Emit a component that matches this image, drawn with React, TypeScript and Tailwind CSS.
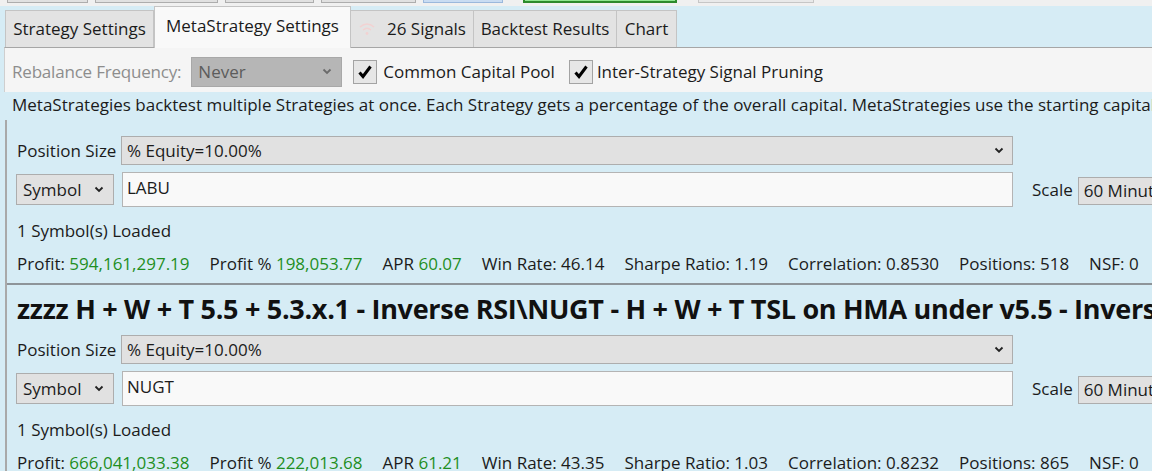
import React from 'react';

const stats1 = [
  { label: 'Profit:', value: '594,161,297.19', green: true },
  { label: 'Profit %', value: '198,053.77', green: true },
  { label: 'APR', value: '60.07', green: true },
  { label: 'Win Rate:', value: '46.14' },
  { label: 'Sharpe Ratio:', value: '1.19' },
  { label: 'Correlation:', value: '0.8530' },
  { label: 'Positions:', value: '518' },
  { label: 'NSF:', value: '0' },
];

const stats2 = [
  { label: 'Profit:', value: '666,041,033.38', green: true },
  { label: 'Profit %', value: '222,013.68', green: true },
  { label: 'APR', value: '61.21', green: true },
  { label: 'Win Rate:', value: '43.35' },
  { label: 'Sharpe Ratio:', value: '1.03' },
  { label: 'Correlation:', value: '0.8232' },
  { label: 'Positions:', value: '865' },
  { label: 'NSF:', value: '0' },
];

const Chevron = ({ color = '#222' }: { color?: string }) => (
  <svg width="10" height="7" viewBox="0 0 10 7" className="flex-none">
    <path d="M1.5 1.5 L5 5 L8.5 1.5" fill="none" stroke={color} strokeWidth="1.8" />
  </svg>
);

const Check = () => (
  <div className="w-[24px] h-[24px] flex-none border border-[#a3a3a3] bg-[#e6e6e6] flex items-center justify-center">
    <svg width="16" height="16" viewBox="0 0 16 16">
      <path d="M2.5 8.5 L6 12.5 L13.5 2.5" fill="none" stroke="#000" strokeWidth="3" />
    </svg>
  </div>
);

type Stat = { label: string; value: string; green?: boolean };

const StrategyBlock = ({ symbol, stats }: { symbol: string; stats: Stat[] }) => (
  <div className="pl-[10px]">
    {/* Position size row */}
    <div className="flex items-center h-[29px]">
      <div className="w-[104px] flex-none whitespace-nowrap">Position Size</div>
      <div className="w-[892px] flex-none h-[29px] border border-[#adadad] bg-[#e1e1e1] flex items-center justify-between pl-[5px] pr-[8px]">
        <span>% Equity=10.00%</span>
        <Chevron />
      </div>
    </div>

    {/* Symbol row */}
    <div className="flex items-center h-[35px] mt-[7px] -ml-[1px]">
      <div className="w-[98px] h-[31px] flex-none border border-[#adadad] bg-[#e1e1e1] flex items-center justify-between pl-[6px] pr-[9px]">
        <span>Symbol</span>
        <Chevron />
      </div>
      <div className="w-[891px] h-[35px] flex-none ml-[8px] border border-[#b4b4b4] bg-[#f9f9f9] pl-[4px] pt-[2px]">
        {symbol}
      </div>
      <div className="ml-[19px] flex-none">Scale</div>
      <div className="ml-[5px] mt-[3px] w-[90px] h-[28px] flex-none border border-[#adadad] bg-[#e1e1e1] pl-[5px] flex items-center whitespace-nowrap overflow-hidden">
        60 Minute
      </div>
    </div>

    <div className="mt-[12px] h-[24px] leading-[24px]">1 Symbol(s) Loaded</div>

    <div className="mt-[9px] h-[24px] leading-[24px] flex gap-[20px] whitespace-nowrap">
      {stats.map(s => (
        <div key={s.label} className="flex-none">
          {s.label} <span className={s.green ? 'text-[#1f8f1f]' : ''}>{s.value}</span>
        </div>
      ))}
    </div>
  </div>
);

export default function App() {
  return (
    <div className="w-[1152px] h-[471px] overflow-hidden bg-[#d6ecf5] text-[17px] text-[#1b1b1b] font-['Open_Sans',sans-serif]">
      {/* Partially visible toolbar buttons */}
      <div className="h-[6px] bg-[#f0f0f0] flex items-start">
        <div className="ml-[7px] w-[81px] h-[3px] border border-t-0 border-[#adadad] bg-[#e1e1e1]" />
        <div className="ml-[7px] w-[123px] h-[3px] border border-t-0 border-[#adadad] bg-[#e1e1e1]" />
        <div className="ml-[7px] w-[89px] h-[3px] border border-t-0 border-[#adadad] bg-[#e1e1e1]" />
        <div className="ml-[7px] w-[95px] h-[3px] border border-t-0 border-[#adadad] bg-[#e1e1e1]" />
        <div className="ml-[7px] w-[80px] h-[3px] border border-t-0 border-[#9bb8dc] bg-[#c9dcf2]" />
        <div className="ml-[20px] w-[154px] h-[3px] border-2 border-t-0 border-[#2c8a2c] bg-[#8fe68f]" />
        <div className="ml-[21px] w-[116px] h-[3px] border border-t-0 border-[#c6c6c6] bg-[#e9e9e9]" />
      </div>

      {/* Tabs */}
      <div className="h-[41px] flex items-end pl-[5px] relative z-10">
        <div className="w-[149px] h-[37px] flex-none border border-b-0 border-[#c4c4c4] bg-[#e3e3e3] flex items-center justify-center pb-[1px]">
          Strategy Settings
        </div>
        <div className="w-[197px] h-[42px] -mb-[1px] flex-none border border-b-0 border-[#c4c4c4] bg-[#f9f9f9] flex items-center justify-center pb-[3px]">
          MetaStrategy Settings
        </div>
        <div className="w-[123px] h-[37px] flex-none border border-b-0 border-l-0 border-[#c4c4c4] bg-[#e3e3e3] flex items-center pl-[7px] pb-[1px]">
          <svg width="18" height="16" viewBox="0 0 18 16" className="flex-none mr-[11px]">
            <path d="M2 6 Q9 0 16 6" fill="none" stroke="#f2d2d2" strokeWidth="1.6" />
            <path d="M5 9 Q9 5.5 13 9" fill="none" stroke="#f2d2d2" strokeWidth="1.6" />
            <circle cx="9" cy="12.5" r="1.4" fill="#f2d2d2" />
          </svg>
          26 Signals
        </div>
        <div className="w-[143px] h-[37px] flex-none border border-b-0 border-l-0 border-[#c4c4c4] bg-[#e3e3e3] flex items-center justify-center pb-[1px]">
          Backtest Results
        </div>
        <div className="w-[60px] h-[37px] flex-none border border-b-0 border-l-0 border-[#c4c4c4] bg-[#e3e3e3] flex items-center justify-center pb-[1px]">
          Chart
        </div>
      </div>

      {/* Toolbar */}
      <div className="ml-[4px] h-[45px] border-t border-l border-[#a6a6a6] border-l-[#cfcfcf] bg-[#f5f5f5] flex items-center pt-[3px] pl-[7px] whitespace-nowrap">
        <span className="text-[#8d8d8d] tracking-[-0.2px]">Rebalance Frequency:</span>
        <div className="ml-[10px] w-[151px] h-[30px] flex-none border border-[#a8a8a8] bg-[#b6b6b6] text-[#5c5c5c] flex items-center justify-between pl-[6px] pr-[9px]">
          <span>Never</span>
          <Chevron color="#6a6a6a" />
        </div>
        <div className="ml-[11px]">
          <Check />
        </div>
        <span className="ml-[6px]">Common Capital Pool</span>
        <div className="ml-[14px]">
          <Check />
        </div>
        <span className="ml-[4px]">Inter-Strategy Signal Pruning</span>
      </div>

      {/* Description */}
      <div className="h-[28px] pt-[1px] pl-[12px] leading-[23px] whitespace-nowrap overflow-hidden">
        MetaStrategies backtest multiple Strategies at once. Each Strategy gets a percentage of the overall capital. MetaStrategies use the starting capital and position sizing of each Strategy.
      </div>

      {/* Strategy list */}
      <div className="ml-[5px] border-l-2 border-[#a9a9a9] h-[400px] overflow-hidden">
        <div className="pt-[16px]">
          <StrategyBlock symbol="LABU" stats={stats1} />
        </div>
        <div className="mt-[7px] h-[2px] bg-[#8e9499]" />
        <div>
          <div className="h-[45px] pl-[10px] pt-[3px] flex items-center whitespace-nowrap text-[27px] font-bold text-[#111] tracking-[-0.3px]">
            zzzz H + W + T 5.5 + 5.3.x.1 - Inverse RSI\NUGT - H + W + T TSL on HMA under v5.5 - Inverse RSI
          </div>
          <div className="mt-[5px]">
            <StrategyBlock symbol="NUGT" stats={stats2} />
          </div>
        </div>
      </div>
    </div>
  );
}
